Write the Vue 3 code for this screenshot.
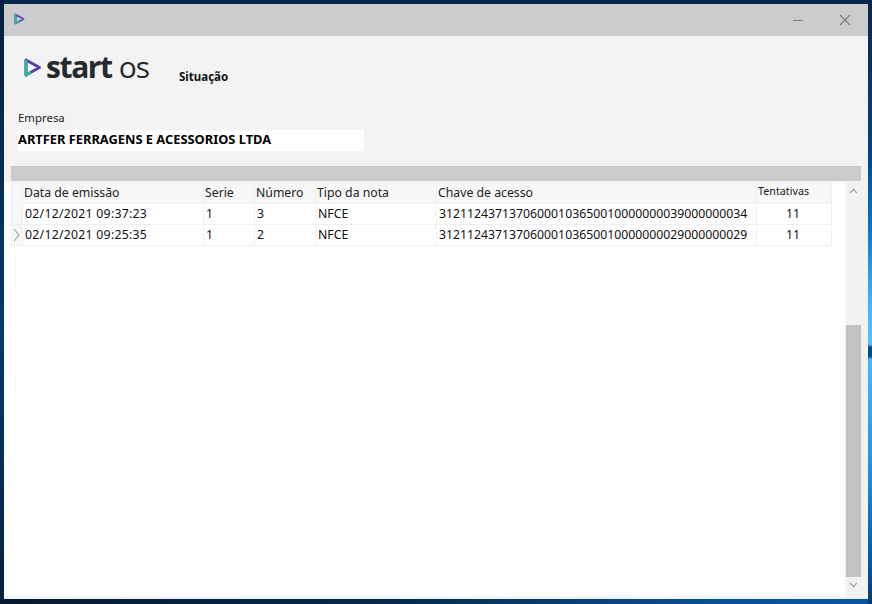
<template>
  <div class="desktop">
    <div class="window">
      <div class="titlebar">
        <svg class="app-icon" width="11" height="12" viewBox="0 0 11 12">
          <path d="M1.5 1.5 L9.5 6 L1.5 10.5 Z" fill="none" stroke="#5b4bb0" stroke-width="2" stroke-linejoin="round" />
          <path d="M1.5 1.5 L1.5 10.5 L5 8.5" fill="none" stroke="#2fb39a" stroke-width="2" stroke-linejoin="round" />
        </svg>
        <div class="win-buttons">
          <svg width="12" height="12" viewBox="0 0 12 12"><path d="M1 6.5 H11" stroke="#7d7d7d" stroke-width="1" /></svg>
          <svg width="12" height="12" viewBox="0 0 12 12"><path d="M1 1 L11 11 M11 1 L1 11" stroke="#7d7d7d" stroke-width="1.1" /></svg>
        </div>
      </div>

      <div class="content">
        <div class="brand">
          <div class="logo">
            <svg width="18" height="21" viewBox="0 0 18 21">
              <path d="M2 3 L15.5 10.5 L2 18 Z" fill="none" stroke="#5a3fa8" stroke-width="3" stroke-linejoin="round" />
              <path d="M2 3 L2 18 L7 15.2" fill="none" stroke="#2eb5a0" stroke-width="3" stroke-linejoin="round" />
            </svg>
            <span class="logo-start">start</span>
            <span class="logo-os">os</span>
          </div>
          <span class="situacao">Situação</span>
        </div>

        <div class="empresa">
          <label>Empresa</label>
          <div class="empresa-value">ARTFER FERRAGENS E ACESSORIOS LTDA</div>
        </div>

        <div class="group-bar"></div>

        <div class="grid-area">
          <table class="grid">
            <colgroup>
              <col v-for="w in colWidths" :key="w.id" :style="{ width: w.px + 'px' }" />
            </colgroup>
            <thead>
              <tr>
                <th></th>
                <th>Data de emissão</th>
                <th>Serie</th>
                <th>Número</th>
                <th>Tipo da nota</th>
                <th>Chave de acesso</th>
                <th class="small">Tentativas</th>
              </tr>
            </thead>
            <tbody>
              <tr v-for="row in rows" :key="row.numero">
                <td class="indicator">
                  <svg v-if="row.current" width="7" height="14" viewBox="0 0 7 14">
                    <path d="M1 1 L6 7 L1 13" fill="none" stroke="#8a8a8a" stroke-width="1" />
                  </svg>
                </td>
                <td class="date">{{ row.data }}</td>
                <td>{{ row.serie }}</td>
                <td>{{ row.numero }}</td>
                <td>{{ row.tipo }}</td>
                <td>{{ row.chave }}</td>
                <td class="center">{{ row.tentativas }}</td>
              </tr>
            </tbody>
          </table>

          <div class="scrollbar">
            <svg class="arrow up" width="9" height="6" viewBox="0 0 9 6"><path d="M1 5 L4.5 1.5 L8 5" fill="none" stroke="#a6a6a6" stroke-width="1.4" /></svg>
            <div class="track"><div class="thumb"></div></div>
            <svg class="arrow down" width="9" height="6" viewBox="0 0 9 6"><path d="M1 1 L4.5 4.5 L8 1" fill="none" stroke="#a6a6a6" stroke-width="1.4" /></svg>
          </div>
        </div>
      </div>
    </div>
  </div>
</template>

<script setup>
const colWidths = [
  { id: 'ind', px: 11 },
  { id: 'data', px: 181 },
  { id: 'serie', px: 51 },
  { id: 'numero', px: 61 },
  { id: 'tipo', px: 121 },
  { id: 'chave', px: 320 },
  { id: 'tent', px: 75 }
]

const rows = [
  { data: '02/12/2021 09:37:23', serie: 1, numero: 3, tipo: 'NFCE', chave: '31211243713706000103650010000000039000000034', tentativas: 11, current: false },
  { data: '02/12/2021 09:25:35', serie: 1, numero: 2, tipo: 'NFCE', chave: '31211243713706000103650010000000029000000029', tentativas: 11, current: true }
]
</script>

<style>
html, body {
  margin: 0;
  height: 100%;
  overflow: hidden;
}
</style>

<style scoped>
.desktop {
  width: 872px;
  height: 604px;
  box-sizing: border-box;
  padding: 4px 4px 5px 4px;
  background:
    linear-gradient(180deg, #07284c 0, #06427e 25%, #0a78cc 38%, #45b4f2 50%, #5cc0fa 57%, #0a4a80 57.5%, #0a4a80 59%, #4bb8f5 59.5%, #1f90e0 78%, #0a62b0 90%, #053a70 100%) right top / 4px 100% no-repeat,
    linear-gradient(90deg, #04192e 0, #052a4c 45%, #0a4d92 80%, #0a55a0 100%) left bottom / 100% 5px no-repeat,
    linear-gradient(180deg, #04213f 0, #053a6c 55%, #03223f 100%) left top / 4px 100% no-repeat,
    #07284c;
  font-family: "Noto Sans", sans-serif;
  font-size: 12.25px;
  color: #111;
}
.window {
  height: 100%;
  display: flex;
  flex-direction: column;
  box-sizing: border-box;
  background: #fff;
  border-bottom: 3px solid #eef5fb;
}
.titlebar {
  height: 32px;
  flex: none;
  background: #cccccc;
  display: flex;
  align-items: center;
  justify-content: space-between;
  padding: 0 17px 0 10px;
}
.app-icon {
  margin-top: -2px;
}
.win-buttons {
  display: flex;
  gap: 35px;
}
.content {
  flex: 1;
  min-height: 0;
  display: flex;
  flex-direction: column;
  padding-left: 7px;
  background: linear-gradient(#f3f3f3 0, #f3f3f3 146px, #fff 146px);
}
.brand {
  height: 75px;
  flex: none;
  display: flex;
  align-items: flex-start;
}
.logo {
  display: flex;
  align-items: baseline;
  width: 168px;
  padding: 13px 0 0 13px;
  box-sizing: border-box;
  color: #26292e;
  font-family: "Open Sans", sans-serif;
  line-height: 36px;
}
.logo svg {
  align-self: center;
  margin-right: 4px;
}
.logo-start {
  font-size: 30px;
  font-weight: 700;
  letter-spacing: -1.4px;
}
.logo-os {
  font-size: 30px;
  margin-left: 7px;
  letter-spacing: -1px;
  font-weight: 400;
}
.situacao {
  margin-top: 34px;
  font-weight: 700;
  font-size: 11.5px;
  line-height: 14px;
}
.empresa {
  flex: none;
  padding-left: 7px;
}
.empresa label {
  display: block;
  height: 19px;
  line-height: 14px;
  font-size: 11.4px;
  color: #222;
}
.empresa-value {
  width: 346px;
  height: 21px;
  background: #fff;
  font-weight: 700;
  font-size: 12.85px;
  line-height: 18px;
  color: #000;
}
.group-bar {
  flex: none;
  height: 15px;
  margin: 15px 7px 1px 0;
  background: #cbcbcb;
}
.grid-area {
  flex: 1;
  min-height: 0;
  display: flex;
  justify-content: space-between;
  background: #fff;
}
.grid {
  border-collapse: collapse;
  table-layout: fixed;
  width: 820px;
  align-self: flex-start;
}
.grid th,
.grid td {
  height: 20px;
  padding: 0 0 0 2px;
  border: 1px solid #f0f0f0;
  text-align: left;
  white-space: nowrap;
  overflow: hidden;
  font-weight: 400;
  line-height: 20px;
}
.grid th {
  padding-left: 1px;
  background: #f7f7f7;
  color: #222;
}
.grid td {
  color: #111;
}
.grid th.small {
  font-size: 10.75px;
  line-height: 16px;
  vertical-align: top;
  padding-left: 1px;
}
.grid td.date {
  letter-spacing: 0.27px;
}
.grid td.center {
  text-align: center;
  padding: 0 2px 0 0;
}
.grid .indicator {
  background: #f7f7f7;
  padding: 0 0 0 1px;
  line-height: 0;
}
.scrollbar {
  flex: none;
  width: 23px;
  display: flex;
  flex-direction: column;
  background: #f2f2f2;
}
.arrow {
  flex: none;
  margin-left: 4px;
}
.arrow.up {
  margin-top: 6px;
}
.arrow.down {
  margin-top: 5px;
  margin-bottom: 8px;
}
.track {
  flex: 1;
  display: flex;
  flex-direction: column;
  justify-content: flex-end;
}
.thumb {
  height: 252px;
  width: 15px;
  margin-left: 1px;
  background: #c2c2c2;
}
</style>
